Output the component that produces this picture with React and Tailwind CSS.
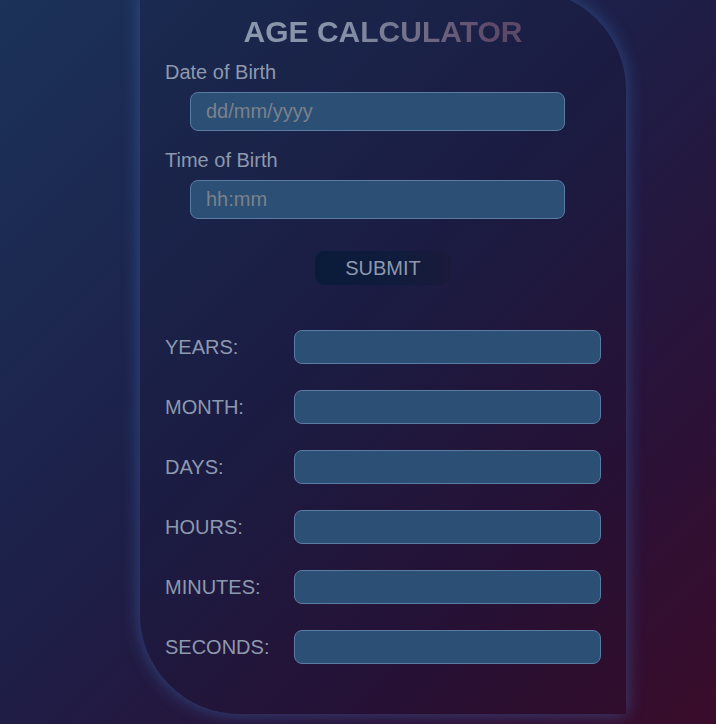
import { useState } from "react";

const RESULTS = ["YEARS:", "MONTH:", "DAYS:", "HOURS:", "MINUTES:", "SECONDS:"];

const App = () => {
  const [dob, setDob] = useState("");
  const [tob, setTob] = useState("");

  return (
    <div
      className="w-full h-[724px] overflow-hidden bg-[linear-gradient(135deg,#1b3259_0%,#1d1f48_45%,#2a1238_75%,#3a0c2a_100%)]"
      style={{ fontFamily: "'Liberation Sans', Arial, sans-serif" }}
    >
      {/* card */}
      <div className="ml-[140px] -mt-[10px] w-[486px] rounded-tr-[100px] rounded-bl-[100px] bg-[#050a20]/10 shadow-[0_0_18px_rgba(70,130,210,0.45)] pt-[25px] pb-[50px] px-[25px]">
        <h1 className="text-center text-[30px] leading-[34px] font-bold bg-[linear-gradient(90deg,#8f9bb0_0%,#8592a8_40%,#5d4a68_75%,#5a4565_100%)] bg-clip-text text-transparent">
          AGE CALCULATOR
        </h1>

        <label className="block mt-[12px] text-[20px] leading-[23px] text-[#8d99ae]">
          Date of Birth
        </label>
        <input
          value={dob}
          onChange={(e) => setDob(e.target.value)}
          placeholder="dd/mm/yyyy"
          className="block mt-[8px] ml-[25px] w-[375px] h-[39px] rounded-[8px] border border-[#5a7ba2] bg-[#2c4f76] px-[15px] text-[20px] text-[#c8d2e0] placeholder:text-[#7b8189] outline-none"
        />

        <label className="block mt-[18px] text-[20px] leading-[23px] text-[#8d99ae]">
          Time of Birth
        </label>
        <input
          value={tob}
          onChange={(e) => setTob(e.target.value)}
          placeholder="hh:mm"
          className="block mt-[8px] ml-[25px] w-[375px] h-[39px] rounded-[8px] border border-[#5a7ba2] bg-[#2c4f76] px-[15px] text-[20px] text-[#c8d2e0] placeholder:text-[#7b8189] outline-none"
        />

        <div className="flex justify-center mt-[32px]">
          <button className="w-[136px] h-[34px] rounded-[9px] bg-[linear-gradient(90deg,#0a1b3a_0%,#0f1c3c_55%,#1b1a3a_100%)] text-[20px] text-[#8d99ae]">
            SUBMIT
          </button>
        </div>

        {/* results */}
        <div className="mt-[45px] flex flex-col gap-[26px]">
          {RESULTS.map((r) => (
            <div key={r} className="flex items-center">
              <span className="w-[129px] text-[20px] text-[#8d99ae]">{r}</span>
              <input
                readOnly
                className="w-[307px] h-[34px] rounded-[8px] border border-[#5a7ba2] bg-[#2c4f76] outline-none"
              />
            </div>
          ))}
        </div>
      </div>
    </div>
  );
};

export default App;
